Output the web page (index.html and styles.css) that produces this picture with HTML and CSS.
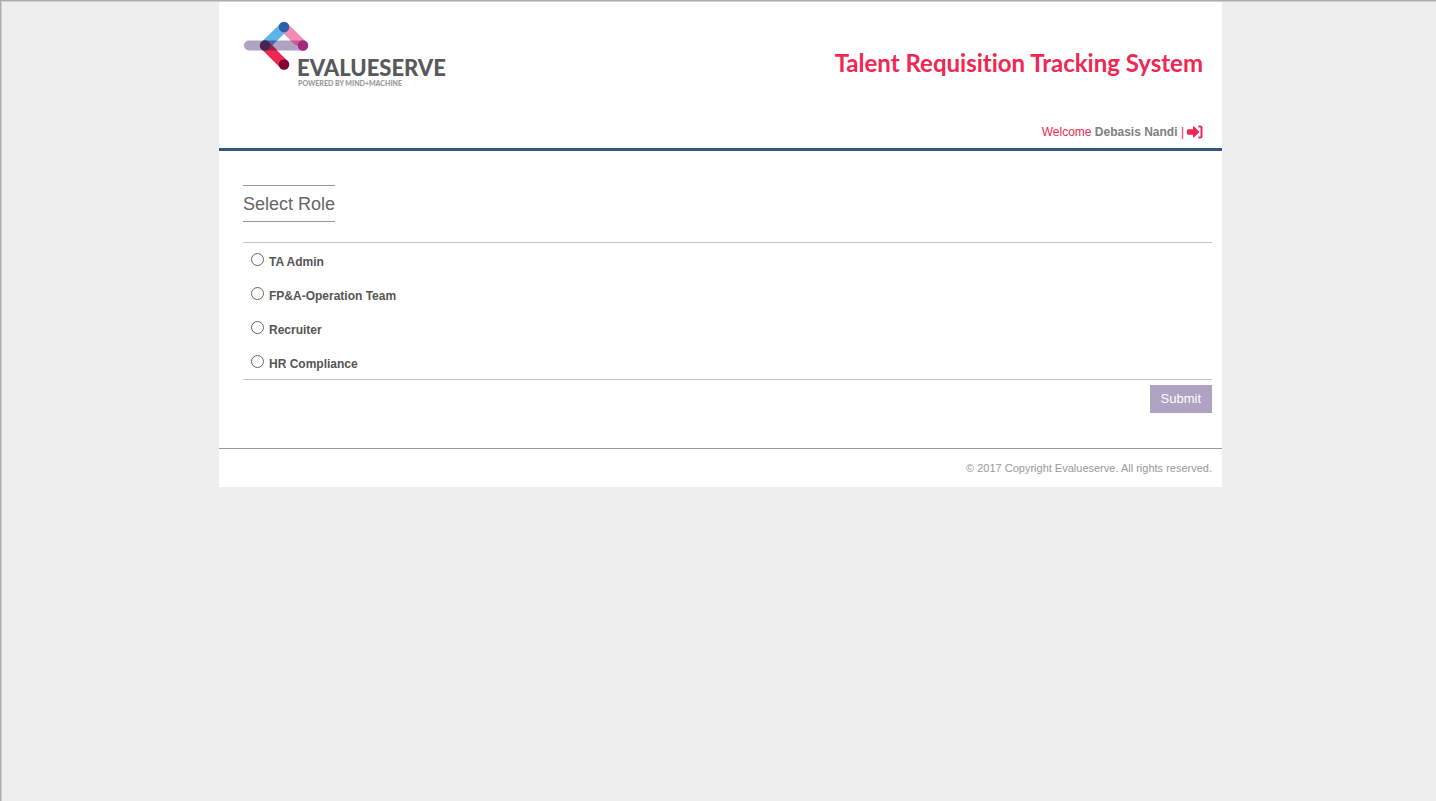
FILE: index.html
```html
<!DOCTYPE html>
<html lang="en">
<head>
<meta charset="utf-8">
<title>Talent Requisition Tracking System</title>
<link rel="stylesheet" href="styles.css">
</head>
<body>
<div class="page">
  <header class="header">
    <div class="brand-row">
      <svg class="logo" width="216" height="72" viewBox="0 0 216 72" role="img" aria-label="Evalueserve, powered by Mind+Machine">
        <g stroke-width="10" stroke-linecap="round" fill="none">
          <path d="M6 26.500H60" stroke="#b0a2c2"/>
          <path d="M41 8L60 26.500" stroke="#f48bb2"/>
          <path d="M22 26.500L41 8" stroke="#5cb5e6"/>
          <path d="M22 26.500L41 45.500" stroke="#f12653"/>
        </g>
        <path d="M20.500 21.500h13.600L24 31.500z" fill="#4a62a6"/>
        <path d="M25.500 22.500l9 9h-9z" fill="#98224f"/>
        <path d="M47 21.500h13v5h-7z" fill="#c45c98"/>
        <circle cx="41" cy="8" r="5.200" fill="#2e5fa8"/>
        <circle cx="60" cy="26.500" r="5.200" fill="#a0297f"/>
        <circle cx="22" cy="26.500" r="5.200" fill="#46264f"/>
        <circle cx="41" cy="45.500" r="5.200" fill="#830034"/>
        <text class="logo-name" x="54" y="57">EVALUESERVE</text>
        <text class="logo-tagline" x="55" y="67">POWERED BY MIND+MACHINE</text>
      </svg>
      <h1 class="title">Talent Requisition Tracking System</h1>
    </div>
    <div class="welcome">
      <span>Welcome <strong class="user">Debasis Nandi</strong> |</span>
      <a class="logout" href="#" aria-label="Log out">
        <svg width="16" height="14" viewBox="0 0 16 14" aria-hidden="true">
          <path d="M1 4.200h5V2q0-1.400 1.100-.4l4.700 4.500q.7.8 0 1.600L7.100 12.300Q6 13.200 6 12V9.700H1Q0 9.700 0 8.700V5.200Q0 4.200 1 4.200z" fill="#f12653"/>
          <path d="M11.500 1.500h1.500Q14.500 1.500 14.500 3v8q0 1.500-1.500 1.500h-1.500" fill="none" stroke="#f12653" stroke-width="2"/>
        </svg>
      </a>
    </div>
  </header>
  <main class="content">
    <h2 class="heading">Select Role</h2>
    <form class="role-form">
      <div class="roles" role="radiogroup" aria-label="Select Role">
        <label class="role"><input type="radio" name="role"><span>TA Admin</span></label>
        <label class="role"><input type="radio" name="role"><span>FP&amp;A-Operation Team</span></label>
        <label class="role"><input type="radio" name="role"><span>Recruiter</span></label>
        <label class="role"><input type="radio" name="role"><span>HR Compliance</span></label>
      </div>
      <button class="submit" type="button">Submit</button>
    </form>
  </main>
  <footer class="footer">© 2017 Copyright Evalueserve. All rights reserved.</footer>
</div>
</body>
</html>
```
FILE: styles.css
```css
* { box-sizing: border-box; }

html {
  min-height: 100%;
  background: #eee;
  border-top: 1px solid #acacac;
  border-left: 1px solid #acacac;
}

body {
  margin: 0;
  padding-left: 3px;
  border-top: 1px solid #d0d0d0;
  border-left: 1px solid #d0d0d0;
  min-height: calc(100vh - 1px);
  font-family: "Liberation Sans", Arial, sans-serif;
  font-size: 12px;
  color: #555;
}

.page {
  max-width: 1003px;
  margin: 0 auto;
  background: #fff;
}

.header {
  padding: 17px 19px 8px 24px;
  border-bottom: 3px solid #37587e;
}

.brand-row {
  display: flex;
  justify-content: space-between;
  align-items: flex-start;
  flex-wrap: wrap;
}

.logo-name {
  font: 900 22px Lato, sans-serif;
  fill: #58595b;
}

.logo-tagline {
  font: 900 7px Lato, sans-serif;
  fill: #98999b;
}

.title {
  margin: 28px 0 0;
  font: 700 24px/32px Lato, sans-serif;
  font-variant-ligatures: none;
  color: #f12653;
}

.welcome {
  display: flex;
  justify-content: flex-end;
  align-items: center;
  gap: 3px;
  margin-top: 33px;
  line-height: 16px;
  color: #f12653;
}

.user { color: #808080; }

.logout { display: flex; }

.content {
  padding: 34px 10px 35px 24px;
}

.heading {
  width: fit-content;
  margin: 0 0 20px;
  padding-top: 2px;
  border: solid #999;
  border-width: 1px 0;
  font-size: 18px;
  font-weight: 400;
  line-height: 33px;
  color: #666;
}

.role-form {
  display: flex;
  flex-direction: column;
}

.roles {
  border: solid #c4c4c4;
  border-width: 1px 0;
}

.role {
  display: flex;
  align-items: flex-start;
  gap: 5px;
  height: 34px;
  padding: 10px 8px;
  font-weight: 700;
  line-height: 18px;
}

.role input {
  appearance: none;
  width: 13px;
  height: 13px;
  margin: 0;
  border: 1px solid #666;
  border-radius: 50%;
  background: #fff;
}

.role input:checked {
  background: #666;
  box-shadow: inset 0 0 0 3px #fff;
}

.submit {
  align-self: flex-end;
  margin-top: 5px;
  padding: 0 11px;
  border: 0;
  background: #b0a2c2;
  font: 13px/28px "Liberation Sans", Arial, sans-serif;
  color: #fff;
}

.footer {
  padding: 10px 10px 9px;
  border-top: 1px solid #999;
  font-size: 11px;
  line-height: 19px;
  text-align: right;
  color: #999;
}
```
